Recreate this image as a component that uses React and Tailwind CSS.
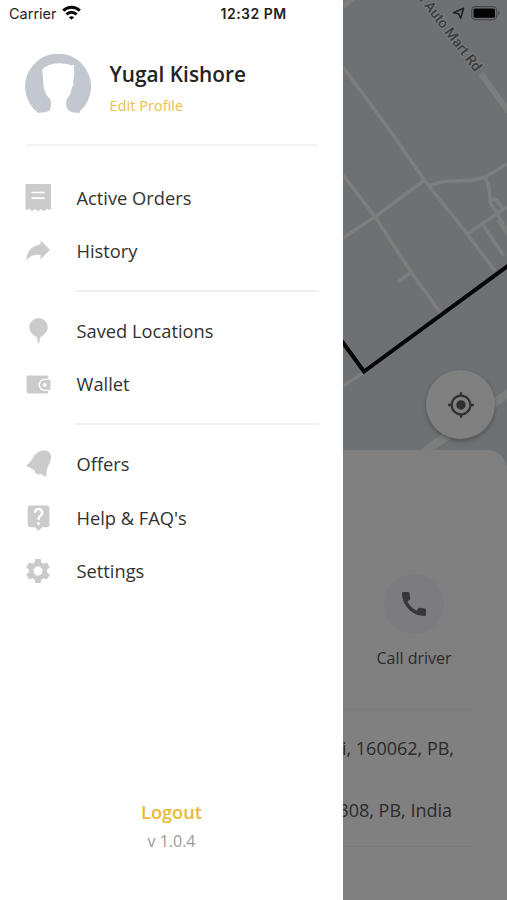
import React from 'react'
import { MdCall, MdLiveHelp, MdMyLocation, MdSettings } from 'react-icons/md'

const menuGroups = [
  [
    { label: 'Active Orders', icon: OrdersIcon },
    { label: 'History', icon: HistoryIcon }
  ],
  [
    { label: 'Saved Locations', icon: PinIcon },
    { label: 'Wallet', icon: WalletIcon }
  ],
  [
    { label: 'Offers', icon: BellIcon },
    { label: "Help & FAQ's", icon: HelpIcon },
    { label: 'Settings', icon: SettingsIcon }
  ]
]

const roads = [
  'M0 67 L43 125 L82 181 L122 231 L152 271',
  'M0 175 L33 218 L68 272 L99 315',
  'M82 180 L33 216 L0 238',
  'M68 272 L55 282',
  'M85 186 Q98 181 112 181 L130 180 Q136 179 142 177 L164 164',
  'M142 177 Q147 185 147 202 L164 230',
  'M147 202 Q151 195 157 205 L159 208',
  'M164 207 L130 230 L126 234',
  'M138 222 L161 256',
  'M155 220 L165 235',
  'M0 386 L20 373'
]

function OrdersIcon() {
  return (
    <svg width="28" height="28" viewBox="0 0 28 28" fill="currentColor">
      <path d="M.5 0h25.500v25.500l-2 .5-2-1.300-2.500 2h-1.800l-2-1.700-1.700 1.700h-2l-2-1.700-2 1.700H6.200l-2-2L2 26l-1.500-.5z" />
      <path d="M6.500 8.500h13M6.500 14.200h13" stroke="#fff" strokeWidth="1.700" />
    </svg>
  )
}

function HistoryIcon() {
  return (
    <svg width="28" height="28" viewBox="0 0 28 28" fill="currentColor">
      <path d="M15.500 3.200l9.500 9.600-9.500 9.700v-4.500C9.500 17 5.200 18.500 1.200 23.500c.2-8.500 5.500-15 14.300-16z" />
    </svg>
  )
}

function PinIcon() {
  return (
    <svg width="28" height="28" viewBox="0 0 28 28" fill="currentColor">
      <path d="M13.500 1a9.200 9.200 0 0 1 9.200 9.200c0 4.200-3.600 7.700-7.600 10.300l-.9 5.500h-1.400l-.9-5.500c-4-2.600-7.600-6.100-7.600-10.300A9.200 9.200 0 0 1 13.500 1z" />
    </svg>
  )
}

function WalletIcon() {
  return (
    <svg width="28" height="28" viewBox="0 0 28 28" fill="currentColor">
      <path d="M3.500 4.500h18Q23.500 4.500 23.500 6.500v1.200h-3.800a6.200 6.200 0 0 0 0 12.400h3.800v.9Q23.500 22.500 21.500 22.500H4Q1.500 22.500 1.500 20V6.500Q1.500 4.500 3.500 4.500z" />
      <path fillRule="evenodd" d="M19.800 9.100h5.700v9.600h-5.700a4.800 4.800 0 0 1 0-9.600zm-.1 2.800a2 2 0 1 0 0 4 2 2 0 0 0 0-4z" />
    </svg>
  )
}

function BellIcon() {
  return (
    <svg width="28" height="28" viewBox="0 0 28 28" fill="currentColor">
      <path d="M16.500.8c4.500-1.200 9.200.7 9.500 5.700.3 5.500-4.300 10.300-4.500 16.500l-.3 4-5.500-3.300c-.9.800-2.300 1-3.800.4-1.500-.7-2.200-2-2-3.300L1 15.300C7.700 12.500 7.300 3.500 16.500.8z" />
    </svg>
  )
}

function HelpIcon() {
  return <MdLiveHelp size={29} className="-ml-[1px]" />
}

function SettingsIcon() {
  return <MdSettings size={30} className="-ml-[2px]" />
}

function WifiIcon() {
  return (
    <svg width="19" height="15" viewBox="0 0 19 15" fill="none" stroke="#050505" strokeWidth="3" className="-mt-[2px]">
      <path d="M1.200 5.600a11.800 11.800 0 0 1 16.600 0" />
      <path d="M4.400 9.400a7.300 7.300 0 0 1 10.200 0" />
      <path d="M9.500 14.800l-2.700-2.600q2.700-2.100 5.400 0z" fill="#050505" stroke="none" />
    </svg>
  )
}

function Avatar() {
  return (
    <svg width="66" height="61" viewBox="0 0 66 61" className="shrink-0">
      <path d="M13.300 59a33 33 0 1 1 41.400-1.500l-.2 1.500-6-.4q-3.500-.5-5-2.300c-2.800-3.500-3-7.500-1.500-11.500 2.500-3 4-5.500 4.700-10.500l1.700-3.500-.2-4c1.200-4.500 1.500-9 .5-12.500l.8-3.500-3.800.5c-6-2.800-19-3-24.700 1.500-2.500.5-4.500 3.500-3.500 5.500.5 4 .6 8.500.8 12l.7 4c1 4.500 2.500 7.500 6 10.500 1.800 4.500 1 8-.5 12-3 1.600-7 1.400-11.200 2.200z" fill="#c3c8cf" />
    </svg>
  )
}

function MenuItem({ item }) {
  const Icon = item.icon
  return (
    <li className="flex h-[53.600px] items-center">
      <span className="flex w-[51.500px] shrink-0 text-[#cbcbcb]">
        <Icon />
      </span>
      <span className="-mt-[1px] text-[18.300px] text-[#323232]">{item.label}</span>
    </li>
  )
}

function Drawer() {
  return (
    <aside className="flex w-[343px] shrink-0 flex-col bg-white">
      <div className="flex h-[27px] items-center pl-[9px] font-['Inter',sans-serif] text-[#222]">
        <span className="mr-[6px] w-[47px] text-[14.500px]">Carrier</span>
        <WifiIcon />
        <span className="ml-[139.500px] text-[14px] font-semibold tracking-[0.500px]">12:32 PM</span>
      </div>

      <div className="mr-[24px] ml-[25px] flex h-[119px] border-b-2 border-[#f3f3f3] pt-[27px]">
        <Avatar />
        <div className="ml-[18.500px] flex flex-col">
          <h1 className="mt-[6px] text-[20.800px] leading-[28px] font-semibold text-[#232323]">Yugal Kishore</h1>
          <a className="mt-[6.500px] text-[14.600px] leading-[21px] text-[#edc047]">Edit Profile</a>
        </div>
      </div>

      <nav className="mr-6 ml-[25px] pt-[25px]">
        {menuGroups.map((group, i) => (
          <ul key={i} className={i > 0 ? 'pt-[12.500px]' : ''}>
            {group.map(item => (
              <MenuItem key={item.label} item={item} />
            ))}
            {i < menuGroups.length - 1 && <li className="mt-[12px] ml-[50px] h-[1.500px] bg-[#f0f0f0]" />}
          </ul>
        ))}
      </nav>

      <footer className="mt-auto mb-[47px] flex flex-col items-center">
        <button className="text-[18.200px] leading-[28px] font-semibold text-[#eab936]">Logout</button>
        <span className="mt-[3px] text-[16px] leading-[24px] text-[#9b9b9b]">v 1.0.4</span>
      </footer>
    </aside>
  )
}

function Map() {
  return (
    <svg width="164" height="480" viewBox="0 0 164 480" className="block">
      <rect width="164" height="480" fill="#6e7173" />
      <g fill="none" stroke="#7c7e7e" strokeWidth="3.500" strokeLinejoin="round">
        {roads.map(d => (
          <path key={d} d={d} />
        ))}
        <path d="M0 6 L10 -2 M138 74 L166 112" strokeWidth="6" />
        <path d="M170 390 L78 454" strokeWidth="8.500" />
      </g>
      <path d="M-2 340 L21 371.500 L166 265" fill="none" stroke="#050505" strokeWidth="4" />
      <text
        x="0"
        y="0"
        transform="translate(74 -3) rotate(52.500)"
        fontFamily="Roboto, sans-serif"
        fontSize="14.200"
        fontWeight="500"
        fill="#3c3d3e"
        stroke="#7c7e7f"
        strokeWidth="2"
        paintOrder="stroke"
      >
        e Auto Mart Rd
      </text>
    </svg>
  )
}

function StatusIcons() {
  return (
    <svg width="56" height="16" viewBox="0 0 56 16" className="absolute top-[5px] right-0">
      <path d="M2.500 7.800L12.600 3.300 9.700 13.200 7.500 8.600z" fill="none" stroke="#222" strokeWidth="1.600" strokeLinejoin="round" />
      <rect x="20.700" y="1.600" width="25" height="13" rx="3.800" fill="none" stroke="#48494a" strokeWidth="1.200" />
      <rect x="22.500" y="3.400" width="21.500" height="9.400" rx="1.500" fill="#020202" />
      <path d="M47.200 5.800q3 2.200 0 4.600z" fill="#48494a" />
    </svg>
  )
}

function OrderSheet() {
  return (
    <section className="relative -mt-[30px] flex grow flex-col rounded-tr-[20px] bg-[#808080] pt-[124px] text-[#2b2b2b]">
      <div className="ml-[34px] flex w-[74px] flex-col items-center">
        <div className="flex size-[60px] items-center justify-center rounded-full bg-[#7b7b80] text-[#37373b]">
          <MdCall size={32} />
        </div>
        <span className="mt-[12px] text-[16px] leading-[24px] whitespace-nowrap">Call driver</span>
      </div>
      <div className="mt-[39px] mr-[34px] h-px bg-[#7b7b7b]" />
      {/* addresses run in from under the drawer */}
      <div className="flex w-[111px] justify-end overflow-hidden pt-[24px] text-[18px] leading-[28px] whitespace-nowrap">
        i, 160062, PB,
      </div>
      <div className="flex w-[109px] justify-end overflow-hidden pt-[34px] text-[18px] leading-[28px] whitespace-nowrap">
        308, PB, India
      </div>
      <div className="mt-[22px] mr-[34px] h-px bg-[#7b7b7b]" />
    </section>
  )
}

export default function App() {
  return (
    <div className="flex h-[900px] w-[507px] overflow-hidden font-['Open_Sans','Noto_Sans',sans-serif]">
      <Drawer />
      <main className="relative flex w-[164px] flex-col bg-[#6e7173]">
        <Map />
        <OrderSheet />
        <StatusIcons />
        <button className="absolute top-[370px] left-[83px] flex size-[69px] items-center justify-center rounded-full bg-[#808080] text-[#303030] shadow-[0_2px_4px_rgba(0,0,0,0.300)]">
          <MdMyLocation size={28} />
        </button>
      </main>
    </div>
  )
}
